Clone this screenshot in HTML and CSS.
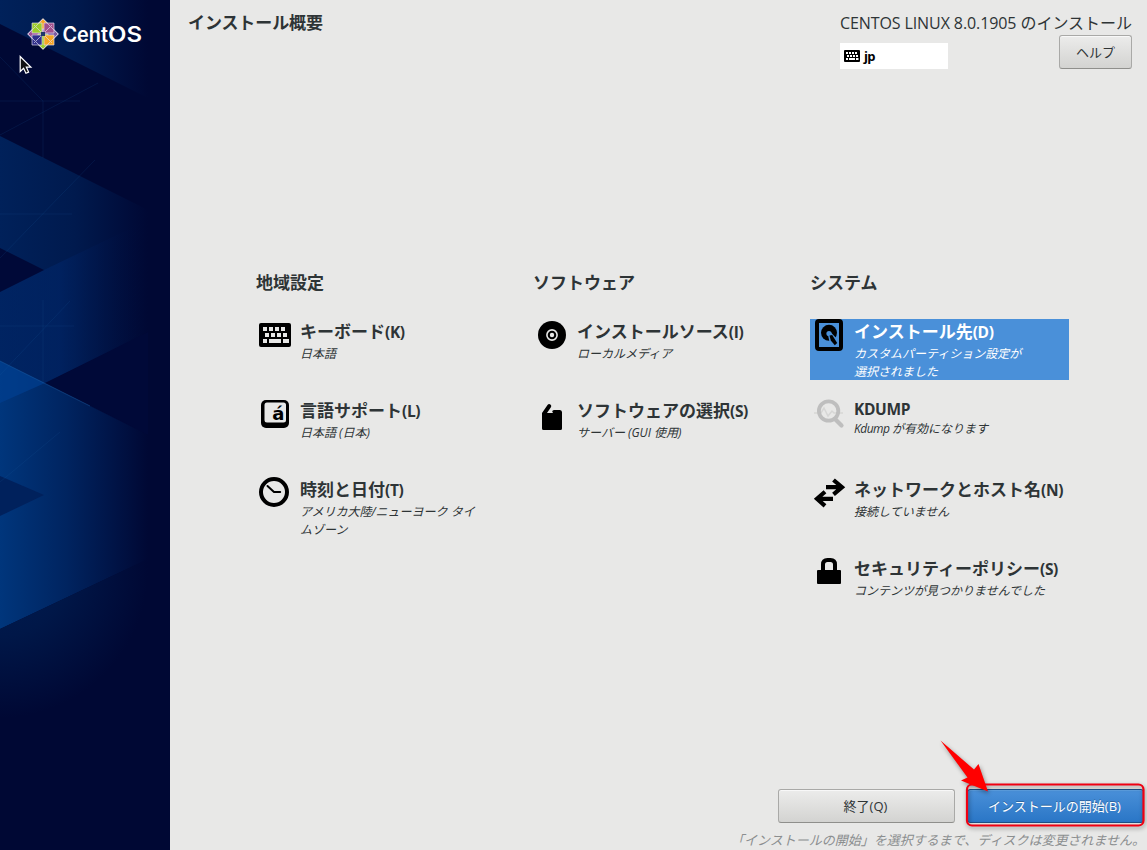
FILE: index.html
```html
<!DOCTYPE html>
<html lang="ja">
<head>
<meta charset="utf-8">
<title>インストール概要</title>
<link rel="stylesheet" href="styles.css">
</head>
<body>
<div class="app">
  <aside class="sidebar">
    <svg class="sidebar-art" width="170" height="850" viewBox="0 0 170 850">
      <defs>
        <linearGradient id="mid" gradientUnits="userSpaceOnUse" x1="0" y1="0" x2="148" y2="0">
          <stop offset="0" stop-color="#00215a"/><stop offset=".5" stop-color="#001a4e"/><stop offset="1" stop-color="#000834"/>
        </linearGradient>
        <linearGradient id="bright" gradientUnits="userSpaceOnUse" x1="0" y1="0" x2="148" y2="0">
          <stop offset="0" stop-color="#00367c"/><stop offset=".45" stop-color="#002460"/><stop offset="1" stop-color="#000834"/>
        </linearGradient>
        <linearGradient id="glow" gradientUnits="userSpaceOnUse" x1="0" y1="0" x2="148" y2="0">
          <stop offset="0" stop-color="#00286e" stop-opacity=".4"/><stop offset=".4" stop-color="#00286e" stop-opacity=".5"/><stop offset="1" stop-color="#000834" stop-opacity="0"/>
        </linearGradient>
        <radialGradient id="fade" gradientUnits="userSpaceOnUse" cx="0" cy="570" r="148">
          <stop offset="0" stop-color="#001c52"/><stop offset=".45" stop-color="#001748"/><stop offset="1" stop-color="#000834"/>
        </radialGradient>
      </defs>
      <path fill="#000834" d="M0 0h170v850H0z"/>
      <path fill="url(#mid)" d="M0 0h148v98L0 24z"/>
      <path fill="url(#mid)" d="M0 136l148 74v225L0 361z"/>
      <path fill="url(#glow)" d="M44 270l104-50v101zM0 292l44-22 104 51v12L45 383 0 361z"/>
      <path fill="#000938" d="M0 248l44 22-44 22zM45 383l103-51v103z"/>
      <path fill="url(#bright)" d="M0 361l148 74v124L0 629z"/>
      <path fill="#003e90" fill-opacity=".7" d="M0 361l45 22-45 20z"/>
      <path fill="#00215c" d="M0 476l44 19-44 21z"/>
      <path fill="url(#fade)" d="M0 629l148-70v170H0z"/>
      <g fill="none" stroke="#1d62a8" stroke-opacity=".15">
        <path d="M0 135L98 83M0 57l43 44M43 101v57M0 101h80M0 258L95 160M0 214h72M43 300v83M0 326h74M0 375l70-74M0 482l60-50"/>
        <path stroke-opacity=".45" d="M0 361l90 45"/>
      </g>
    </svg>
    <svg class="brand" width="140" height="50" viewBox="26 9 140 50">
      <g transform="translate(43 34)" stroke="#e4dff0" stroke-opacity=".65" stroke-width="1">
        <path fill="#f5a623" d="M0-15.5L5-10.5V0H-5V-10.5z"/><path fill="#9c4f96" d="M-15.5 0L-10.5-5H0V5H-10.5z"/>
        <path fill="#7b5aa0" d="M15.5 0L10.5 5H0V-5H10.5z"/><path fill="#9ccd2a" d="M0 15.5L-5 10.5V0H5V10.5z"/>
        <path fill="#9ccd2a" d="M-11-11H-1V-1H-11z"/><path fill="#a14f8c" d="M1-11H11V-1H1z"/>
        <path fill="#30308a" d="M-11 1H-1V11H-11z"/><path fill="#f5a623" d="M1 1H11V11H1z"/>
        <path fill="none" d="M-9-9L9 9M9-9L-9 9M0-15L-7-8M0-15L7-8M0 15L-7 8M0 15L7 8M-15 0l7-7M-15 0l7 7M15 0l-7-7M15 0l-7 7"/>
        <path stroke="none" fill="#20366a" d="M-2-2H2V2H-2z"/>
      </g>
      <text class="brand-text" x="62.5" y="41.500" textLength="45.500" lengthAdjust="spacingAndGlyphs">Cent</text>
      <text class="brand-text" x="108" y="41.500" textLength="34" lengthAdjust="spacingAndGlyphs">OS</text>
    </svg>
    <svg class="cursor" width="14" height="21" viewBox="0 0 14 21"><path d="M1.2 1.5v15l3.4-3.2 2.3 5 2.7-1.2-2.3-5h4.6z" fill="#111" stroke="#fff" stroke-width="1.2"/></svg>
  </aside>

  <main class="main">
    <header class="header">
      <h1 class="page-title">インストール概要</h1>
      <div class="header-right">
        <div class="product"><span class="product-name">CENTOS LINUX 8.0.1905 </span>のインストール</div>
        <div class="header-tools">
          <div class="layout">
            <svg width="16" height="12" viewBox="0 0 32 24"><rect width="32" height="24" rx="2"/><path fill="#fff" d="M4 4h4v4H4zM10 4h4v4h-4zM16 4h4v4h-4zM22 4h4v4h-4zM6 10h4v4H6zM12 10h4v4h-4zM18 10h4v4h-4zM24 10h4v4h-4zM4 16h4v4H4zM10 16h12v4H10zM24 16h5v4h-5z"/></svg>
            <span>jp</span>
          </div>
          <button class="btn btn-help">ヘルプ</button>
        </div>
      </div>
    </header>

    <div class="hub">
      <section class="group">
        <h2 class="group-title">地域設定</h2>
        <div class="spoke">
          <svg class="icon" viewBox="0 0 32 32"><rect y="4" width="32" height="24" rx="2"/><path fill="#e8e8e7" d="M4 8h4v4H4zM10 8h4v4h-4zM16 8h4v4h-4zM22 8h4v4h-4zM6 14h4v4H6zM12 14h4v4h-4zM18 14h4v4h-4zM24 14h4v4h-4zM4 20h4v4H4zM10 20h12v4H10zM24 20h6v4h-6z"/></svg>
          <div class="spoke-text"><h3>キーボード<span class="key">(K)</span></h3><p>日本語</p></div>
        </div>
        <div class="spoke">
          <svg class="icon" viewBox="0 0 32 32"><rect x="2" y="2" width="28" height="28" rx="5"/><rect x="5.5" y="4.5" width="21.5" height="20" rx="2.5" fill="#e8e8e7"/><text class="glyph" x="13.3" y="22">á</text></svg>
          <div class="spoke-text"><h3>言語サポート<span class="key">(L)</span></h3><p>日本語 (日本)</p></div>
        </div>
        <div class="spoke">
          <svg class="icon" viewBox="0 0 32 32" fill="none" stroke="#000"><circle cx="15" cy="15" r="13" stroke-width="4"/><path stroke-width="2" stroke-linecap="round" stroke-linejoin="round" d="M8.5 9l6.5 6h6.2"/></svg>
          <div class="spoke-text"><h3>時刻と日付<span class="key">(T)</span></h3><p>アメリカ大陸/ニューヨーク タイ<br>ムゾーン</p></div>
        </div>
      </section>

      <section class="group">
        <h2 class="group-title">ソフトウェア</h2>
        <div class="spoke">
          <svg class="icon" viewBox="0 0 32 32"><circle cx="16" cy="16" r="14"/><circle cx="16" cy="16" r="5.1" fill="none" stroke="#e8e8e7" stroke-width="1.6"/><circle cx="16" cy="16" r="2.2" fill="#e8e8e7"/></svg>
          <div class="spoke-text"><h3>インストールソース<span class="key">(I)</span></h3><p>ローカルメディア</p></div>
        </div>
        <div class="spoke">
          <svg class="icon" viewBox="0 0 32 32"><path d="M6 15l5.7-8.2q1.3-1.4 3 0 1.2 1.2.2 2.5L11 15h6l-.8-1.4q.2-1.8 2.2-1.6H24q2 .3 2 2.2V30.500q0 1.500-1.500 1.500h-17Q6 32 6 30.500z"/></svg>
          <div class="spoke-text"><h3>ソフトウェアの選択<span class="key">(S)</span></h3><p>サーバー (GUI 使用)</p></div>
        </div>
      </section>

      <section class="group">
        <h2 class="group-title">システム</h2>
        <div class="spoke selected">
          <svg class="icon" viewBox="0 0 32 32"><rect x="4" y="2" width="24" height="28" rx="2" fill="none" stroke="#000" stroke-width="4"/><circle cx="16" cy="13.800" r="8"/><circle cx="16" cy="14.500" r="2.600" fill="#4a90d9"/><path fill="#4a90d9" d="M15 16l1.500 7 6 5 2.500-2-.500-5.500-6.500-7z"/><path d="M16.500 16.500l2.700-.5 5 8-2.400 2.300-4-4.800z"/></svg>
          <div class="spoke-text"><h3>インストール先<span class="key">(D)</span></h3><p>カスタムパーティション設定が<br>選択されました</p></div>
        </div>
        <div class="spoke latin">
          <svg class="icon" viewBox="0 0 32 32" fill="none" stroke="#bebebe"><path stroke="#d6d6d5" stroke-width="1.500" d="M1 15h7l3-5 4 8 4-5 2 2h9"/><circle cx="15.600" cy="13" r="9.700" stroke-width="3.800"/><path stroke-width="4.200" stroke-linecap="round" d="M22.500 21.500l6 6"/></svg>
          <div class="spoke-text"><h3><span class="key">KDUMP</span></h3><p><span class="tight">Kdump </span>が有効になります</p></div>
        </div>
        <div class="spoke">
          <svg class="icon" viewBox="0 0 32 32" fill="none" stroke="#000" stroke-width="4.200"><path d="M13 10.200H29M20.500 3l8.500 7.200-8.500 7.200M20 21.800H4.500M12 14.700l-8 7.100 8 7.100"/></svg>
          <div class="spoke-text"><h3>ネットワークとホスト名<span class="key">(N)</span></h3><p>接続していません</p></div>
        </div>
        <div class="spoke">
          <svg class="icon" viewBox="0 0 32 32"><rect x="4" y="14" width="24" height="14" rx="1"/><path fill="none" stroke="#000" stroke-width="4" d="M10 15V8.500Q10 4 14.500 4h3Q22 4 22 8.500V15"/></svg>
          <div class="spoke-text"><h3>セキュリティーポリシー<span class="key">(S)</span></h3><p>コンテンツが見つかりませんでした</p></div>
        </div>
      </section>
    </div>

    <footer class="footer">
      <div class="actions">
        <button class="btn btn-wide">終了(Q)</button>
        <button class="btn btn-wide btn-primary">インストールの開始(B)</button>
      </div>
      <p class="note">「インストールの開始」を選択するまで、ディスクは変更されません。</p>
    </footer>
  </main>

  <svg class="annotation" width="217" height="120" viewBox="930 730 217 120">
    <rect x="967" y="784.500" width="176.500" height="41" rx="5" fill="none" stroke="#f00012" stroke-width="2.200"/>
    <path fill="#f00" d="M940.500 740.500L974 769.500L978.500 764L988 791.500L961 780.500L967.500 777.500z"/>
  </svg>
</div>
</body>
</html>
```
FILE: styles.css
```css
* { box-sizing: border-box; }
body { margin: 0; }
h1, h2, h3, p { margin: 0; }
.app {
  position: relative;
  display: flex;
  width: 1147px;
  height: 850px;
  overflow: hidden;
  background: #e8e8e7;
  color: #2e3436;
  font-family: "Open Sans", "Noto Sans CJK JP", sans-serif;
}
.sidebar { position: relative; flex: 0 0 170px; height: 850px; }
.sidebar-art { display: block; }
.brand { position: absolute; left: 26px; top: 9px; }
.brand-text { font: 600 21px Inter, sans-serif; fill: #fff; }
.cursor { position: absolute; left: 19px; top: 55px; }
.main { flex: 1; display: flex; flex-direction: column; min-width: 0; }
.header { display: flex; justify-content: space-between; height: 270px; padding: 11px 15px 0 18px; }
.page-title { font-size: 17px; line-height: 24px; font-weight: 700; letter-spacing: -.1px; }
.header-right { width: 292px; }
.product { font-size: 16px; line-height: 24px; white-space: pre; }
.product-name { letter-spacing: -.1px; }
.header-tools { display: flex; justify-content: space-between; align-items: flex-start; }
.layout {
  display: flex;
  align-items: center;
  gap: 4px;
  width: 108px;
  height: 26px;
  margin-top: 8px;
  padding-left: 4px;
  background: #fff;
  color: #000;
  font-size: 13px;
  font-weight: 700;
  letter-spacing: -.6px;
}
.btn {
  height: 34px;
  padding: 0;
  border: 1px solid #a9a9a7;
  border-bottom-color: #8f8f8c;
  border-radius: 3px;
  background: linear-gradient(#ececeb, #d3d3d1);
  box-shadow: inset 0 1px #f8f8f8;
  color: #2e3436;
  font-family: inherit;
  font-size: 13px;
  line-height: 20px;
}
.btn-help { width: 73px; }
.btn-wide { width: 177px; padding-right: 2px; }
.btn-primary {
  border-color: #1c5187;
  background: linear-gradient(#4a90d9, #2a76c6);
  box-shadow: inset 0 1px #5b9ee0;
  color: #fff;
  text-shadow: 0 -1px #0004;
}
.hub { display: grid; grid-template-columns: repeat(3, 259px); column-gap: 18px; padding-left: 86px; }
.group { display: flex; flex-direction: column; gap: 18px; }
.group-title { height: 31px; font-size: 17px; line-height: 26px; font-weight: 700; }
.spoke { display: flex; gap: 9px; height: 61px; padding-left: 3px; }
.icon { flex: none; width: 32px; height: 32px; overflow: visible; }
.glyph { font: bold 18px "DejaVu Sans", sans-serif; }
.spoke-text { width: 215px; }
.spoke h3 { font-size: 17px; line-height: 25px; font-weight: 700; white-space: nowrap; }
.key { font-weight: 700; font-size: 15.5px; letter-spacing: -.35px; }
.tight { letter-spacing: -.5px; }
.spoke p { font-size: 12px; line-height: 18px; font-style: italic; white-space: nowrap; }
.selected { background: #4a90d9; color: #fff; }
.spoke.latin h3 { line-height: 21px; }
.footer { margin-top: auto; }
.actions { display: flex; justify-content: flex-end; gap: 12px; padding-right: 3px; }
.note {
  height: 27px;
  padding: 7px 2px 0 0;
  color: #8b8e8f;
  font-size: 13px;
  line-height: 20px;
  font-style: italic;
  text-align: right;
  white-space: nowrap;
}
.annotation { position: absolute; right: 0; bottom: 0; filter: drop-shadow(1px 2px 2px #0006); pointer-events: none; }
```
